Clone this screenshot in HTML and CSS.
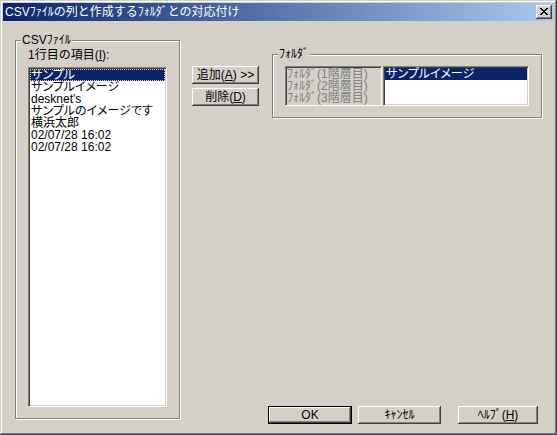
FILE: index.html
```html
<!DOCTYPE html>
<html lang="ja">
<head>
<meta charset="utf-8">
<title>CSVﾌｧｲﾙの列と作成するﾌｫﾙﾀﾞとの対応付け</title>
<link rel="stylesheet" href="styles.css">
</head>
<body>
<div class="window">
  <div class="titlebar">
    <span class="title">CSVﾌｧｲﾙの列と作成するﾌｫﾙﾀﾞとの対応付け</span>
    <button class="close" aria-label="閉じる">
      <svg width="16" height="14" viewBox="0 0 16 14" shape-rendering="crispEdges">
        <path fill="#000" d="M4 3h2v1h-2z M10 3h2v1h-2z M5 4h2v1h-2z M9 4h2v1h-2z M6 5h2v1h-2z M8 5h2v1h-2z M7 6h2v1h-2z M6 7h2v1h-2z M8 7h2v1h-2z M5 8h2v1h-2z M9 8h2v1h-2z M4 9h2v1h-2z M10 9h2v1h-2z"/>
      </svg>
    </button>
  </div>
  <div class="body">
    <div class="group group-csv">
      <span class="caption">CSVﾌｧｲﾙ</span>
      <div class="field-label">1行目の項目(<u>I</u>):</div>
      <div class="listbox list-csv">
        <div class="item selected focused">サンプル</div>
        <div class="item">サンプルイメージ</div>
        <div class="item">desknet's</div>
        <div class="item">サンプルのイメージです</div>
        <div class="item">横浜太郎</div>
        <div class="item">02/07/28 16:02</div>
        <div class="item">02/07/28 16:02</div>
      </div>
    </div>
    <div class="right">
      <div class="top-row">
        <div class="move-buttons">
          <button class="btn">追加(<u>A</u>) &gt;&gt;</button>
          <button class="btn">削除(<u>D</u>)</button>
        </div>
        <div class="group group-folder">
          <span class="caption">ﾌｫﾙﾀﾞ</span>
          <div class="folder-inner">
            <div class="static">
              <div class="static-line">ﾌｫﾙﾀﾞ(1階層目)</div>
              <div class="static-line">ﾌｫﾙﾀﾞ(2階層目)</div>
              <div class="static-line">ﾌｫﾙﾀﾞ(3階層目)</div>
            </div>
            <div class="listbox list-folder">
              <div class="item selected">サンプルイメージ</div>
            </div>
          </div>
        </div>
      </div>
      <div class="dialog-buttons">
        <button class="btn btn-default btn-ok">OK</button>
        <button class="btn btn-cancel">ｷｬﾝｾﾙ</button>
        <button class="btn btn-help">ﾍﾙﾌﾟ(<u>H</u>)</button>
      </div>
    </div>
  </div>
</div>
</body>
</html>
```
FILE: styles.css
```css
html, body {
  margin: 0;
  padding: 0;
  background: #d4d0c8;
}

body {
  font-family: "Liberation Sans", "Noto Sans CJK JP", sans-serif;
  font-size: 12px;
  line-height: 12px;
  color: #000;
}

.window {
  width: 557px;
  height: 435px;
  box-sizing: border-box;
  padding: 3px;
  background: #d4d0c8;
  box-shadow:
    inset -1px -1px #404040,
    inset 1px 1px #d4d0c8,
    inset -2px -2px #808080,
    inset 2px 2px #fff;
  overflow: hidden;
}

.titlebar {
  height: 18px;
  display: flex;
  align-items: center;
  padding: 0 2px 0 2px;
  background: linear-gradient(to right, #0a246a, #a6caf0);
}

.title {
  color: #fff;
  font-size: 12px;
  line-height: 18px;
  white-space: nowrap;
}

.close {
  margin-left: auto;
  width: 16px;
  height: 14px;
  padding: 0;
  border: none;
  background: #d4d0c8;
  box-shadow:
    inset -1px -1px #404040,
    inset 1px 1px #fff,
    inset -2px -2px #808080;
  display: block;
}

.close svg {
  display: block;
}

.body {
  display: flex;
  align-items: flex-start;
  padding: 19px 0 0 12px;
}

.group {
  position: relative;
  box-sizing: border-box;
  border: 1px solid #808080;
  box-shadow: inset 1px 1px #fff, 1px 1px #fff;
}

.caption {
  position: absolute;
  top: -7px;
  left: 5px;
  padding: 0 1px;
  background: #d4d0c8;
  line-height: 12px;
  white-space: nowrap;
}

.group-csv {
  width: 165px;
  height: 379px;
  padding: 8px 12px 0 12px;
}

.field-label {
  line-height: 12px;
  white-space: nowrap;
}

.listbox {
  box-sizing: border-box;
  background: #fff;
  border: 1px solid;
  border-color: #808080 #fff #fff #808080;
  box-shadow: inset 1px 1px #404040, inset -1px -1px #d4d0c8;
  padding: 1px;
  overflow: hidden;
}

.list-csv {
  margin-top: 6px;
  width: 139px;
  height: 340px;
}

.item {
  height: 12px;
  line-height: 12px;
  padding-left: 1px;
  white-space: nowrap;
  font-feature-settings: "palt";
}

.item.selected {
  background: #0a246a;
  color: #fff;
}

.item.focused {
  outline: 1px dotted #e8d070;
  outline-offset: -1px;
}

.right {
  margin-left: 12px;
  height: 384px;
  display: flex;
  flex-direction: column;
}

.top-row {
  display: flex;
  align-items: flex-start;
}

.move-buttons {
  margin-top: 26px;
  width: 67px;
  display: flex;
  flex-direction: column;
  gap: 4px;
}

.btn {
  height: 18px;
  box-sizing: border-box;
  padding: 0;
  margin: 0;
  border: none;
  background: #d4d0c8;
  color: #000;
  font: inherit;
  line-height: 16px;
  text-align: center;
  white-space: nowrap;
  box-shadow:
    inset -1px -1px #404040,
    inset 1px 1px #fff,
    inset -2px -2px #808080;
}

.group-folder {
  margin-left: 13px;
  margin-top: 14px;
  width: 270px;
  height: 64px;
  padding: 11px 0 0 12px;
}

.folder-inner {
  display: flex;
  gap: 1px;
}

.static {
  width: 97px;
  height: 40px;
  box-sizing: border-box;
  border: 1px solid;
  border-color: #808080 #fff #fff #808080;
  box-shadow: inset 1px 1px #404040, inset -1px -1px #d4d0c8;
  padding: 1px 0 0 1px;
  color: #808080;
  overflow: hidden;
}

.static-line {
  height: 12px;
  line-height: 12px;
  white-space: nowrap;
}

.list-folder {
  width: 146px;
  height: 40px;
}

.dialog-buttons {
  margin-top: auto;
  margin-left: 76px;
  display: flex;
}

.btn-default {
  border: 1px solid #000;
}

.btn-ok {
  width: 84px;
}

.btn-cancel {
  width: 83px;
  margin-left: 6px;
}

.btn-help {
  width: 80px;
  margin-left: 17px;
}
```
